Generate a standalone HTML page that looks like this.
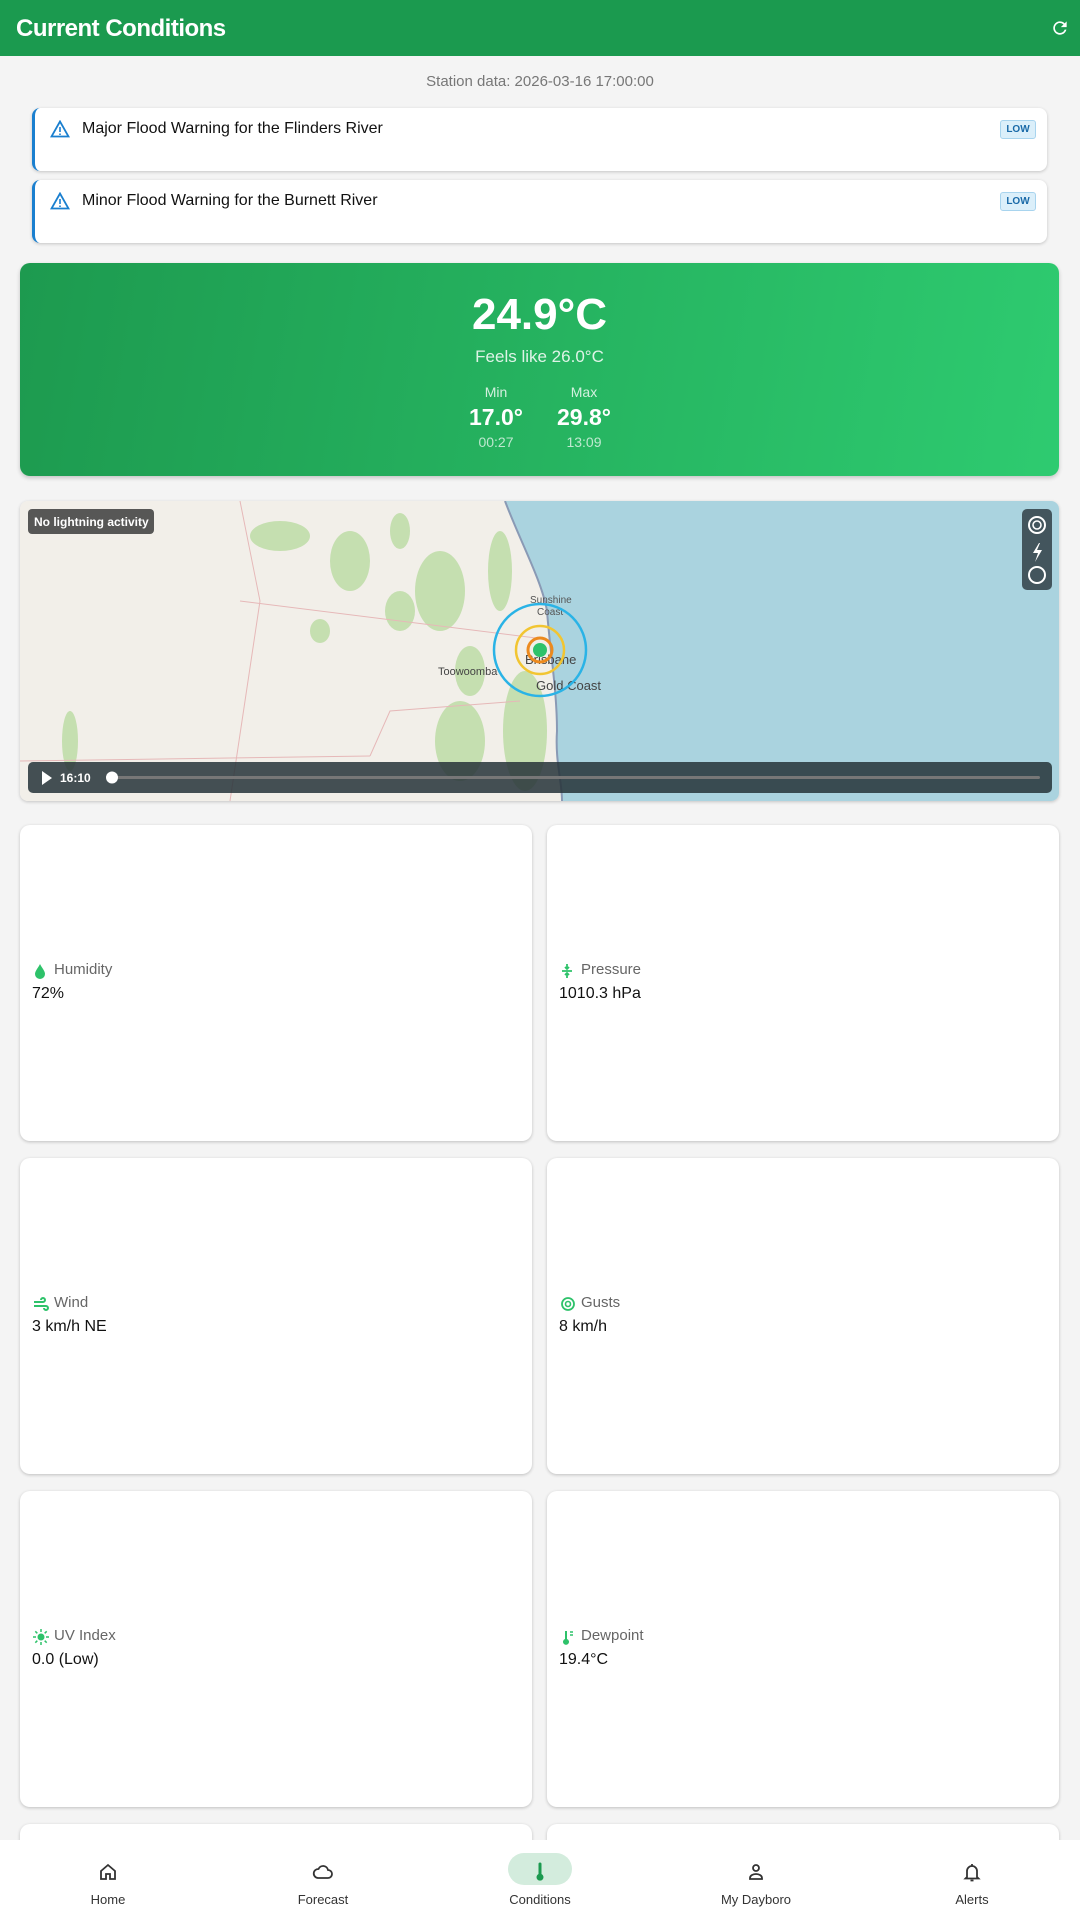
<!DOCTYPE html>
<html style="height:1920px;overflow:hidden"><head><meta charset="utf-8"><style>
*{box-sizing:border-box;margin:0;padding:0}
body{width:1080px;height:1920px;overflow:hidden;background:#f4f4f4;font-family:"Liberation Sans",sans-serif;position:relative;color:#111}
.hdr{position:absolute;left:0;top:0;width:1080px;height:56px;background:#1b9a4f;color:#fff}
.hdr h1{position:absolute;left:16px;top:15px;font-size:24px;font-weight:bold;letter-spacing:-0.5px}
.st{position:absolute;top:73px;width:1080px;text-align:center;color:#777;font-size:15px}
.al{position:absolute;left:32px;width:1015px;height:63px;background:#fff;border-left:3px solid #1a7fcf;border-radius:8px;box-shadow:0 1px 3px rgba(0,0,0,.2)}
.al .t{position:absolute;left:47px;top:12px;font-size:16px}
.al svg{position:absolute;left:15px;top:12px}
.al .b{position:absolute;right:11px;top:12px;width:36px;height:19px;background:#dbeffa;border:1px solid #a8d4ee;border-radius:3px;font-size:10px;color:#1a6aa8;text-align:center;line-height:17px;font-weight:bold}
.tc{position:absolute;left:20px;top:263px;width:1039px;height:213px;border-radius:10px;background:linear-gradient(100deg,#1d9a4f,#2ecb70);box-shadow:0 2px 4px rgba(0,0,0,.2);color:#fff;text-align:center}
.map{position:absolute;left:20px;top:501px;width:1039px;height:300px;border-radius:8px;overflow:hidden;box-shadow:0 1px 3px rgba(0,0,0,.2)}
.c{position:absolute;background:#fff;border-radius:10px;box-shadow:0 1px 3px rgba(0,0,0,.22);width:512px;height:316px}
.c .l{position:absolute;left:34px;top:136px;font-size:15px;color:#666}
.c .v{position:absolute;left:12px;top:160px;font-size:16px;color:#111}
.c svg{position:absolute;left:13px;top:138px}
.nav{position:absolute;left:0;top:1840px;width:1080px;height:80px;background:#fff}
.ni{position:absolute;top:0;width:140px;text-align:center;font-size:13px;color:#333}
.ni .lb{position:absolute;top:52px;width:140px}
.ni svg{position:absolute;left:58px;top:20px}
</style></head><body>
<div class="hdr"><h1>Current Conditions</h1>
<svg style="position:absolute;left:1050px;top:18px" width="20" height="20" viewBox="0 0 24 24"><path d="M17.6 6.4A8 8 0 1 0 19.7 14h-2.1a6 6 0 1 1-1.4-6.2L13 11h7V4z" fill="#fff"/></svg></div>
<div class="st">Station data: 2026-03-16 17:00:00</div>
<div class="al" style="top:108px"><svg width="20" height="18" viewBox="0 0 20 18"><path d="M10 1.5L1.5 16.5h17z" fill="none" stroke="#1a7fcf" stroke-width="1.8"/><path d="M10 7v5M10 13.5v1.5" stroke="#1a7fcf" stroke-width="1.6"/></svg><div class="t">Major Flood Warning for the Flinders River</div><div class="b">LOW</div></div>
<div class="al" style="top:180px"><svg width="20" height="18" viewBox="0 0 20 18"><path d="M10 1.5L1.5 16.5h17z" fill="none" stroke="#1a7fcf" stroke-width="1.8"/><path d="M10 7v5M10 13.5v1.5" stroke="#1a7fcf" stroke-width="1.6"/></svg><div class="t">Minor Flood Warning for the Burnett River</div><div class="b">LOW</div></div>
<div class="tc">
<div style="position:absolute;top:27px;width:100%;font-size:44px;font-weight:bold">24.9°C</div>
<div style="position:absolute;top:84px;width:100%;font-size:17px;opacity:.85">Feels like 26.0°C</div>
<div style="position:absolute;left:446px;top:121px;width:60px;font-size:14px;opacity:.8">Min</div>
<div style="position:absolute;left:534px;top:121px;width:60px;font-size:14px;opacity:.8">Max</div>
<div style="position:absolute;left:436px;top:141px;width:80px;font-size:23px;font-weight:bold">17.0°</div>
<div style="position:absolute;left:524px;top:141px;width:80px;font-size:23px;font-weight:bold">29.8°</div>
<div style="position:absolute;left:446px;top:171px;width:60px;font-size:14px;opacity:.7">00:27</div>
<div style="position:absolute;left:534px;top:171px;width:60px;font-size:14px;opacity:.7">13:09</div>
</div>
<div class="map">
<svg width="1039" height="300" viewBox="0 0 1039 300" style="position:absolute;left:0;top:0">
<rect width="1039" height="300" fill="#f2efe9"/>
<g fill="#c5dfb0">
<ellipse cx="260" cy="35" rx="30" ry="15"/><ellipse cx="330" cy="60" rx="20" ry="30"/><ellipse cx="380" cy="110" rx="15" ry="20"/><ellipse cx="420" cy="90" rx="25" ry="40"/><ellipse cx="450" cy="170" rx="15" ry="25"/><ellipse cx="440" cy="240" rx="25" ry="40"/><ellipse cx="505" cy="230" rx="22" ry="60"/><ellipse cx="480" cy="70" rx="12" ry="40"/><ellipse cx="50" cy="240" rx="8" ry="30"/><ellipse cx="380" cy="30" rx="10" ry="18"/><ellipse cx="300" cy="130" rx="10" ry="12"/>
</g>
<g stroke="#e6b8b8" stroke-width="1" fill="none"><path d="M220 0 L240 100 L210 300"/><path d="M220 100 L540 140"/><path d="M0 260 L350 255"/><path d="M350 255 L370 210 L500 200"/></g>
<path d="M485 0 C500 40 522 80 527 110 C530 150 537 190 537 230 C535 260 542 280 542 300 L1039 300 L1039 0 Z" fill="#aad3df"/>
<path d="M485 0 C500 40 522 80 527 110 C530 150 537 190 537 230 C535 260 542 280 542 300" stroke="#8a9ab5" stroke-width="2" fill="none"/>
<text x="510" y="102" font-size="10" fill="#555" font-family="Liberation Sans">Sunshine</text>
<text x="517" y="114" font-size="10" fill="#555" font-family="Liberation Sans">Coast</text>
<text x="418" y="174" font-size="11" fill="#444" font-family="Liberation Sans">Toowoomba</text>
<text x="505" y="163" font-size="13" fill="#444" font-family="Liberation Sans">Brisbane</text>
<text x="516" y="189" font-size="13" fill="#444" font-family="Liberation Sans">Gold Coast</text>
<circle cx="520" cy="149" r="46" fill="none" stroke="#2ab3e6" stroke-width="2.5"/>
<circle cx="520" cy="149" r="24" fill="none" stroke="#f2c531" stroke-width="2.5"/>
<circle cx="520" cy="149" r="12" fill="none" stroke="#ec8a1e" stroke-width="3"/>
<circle cx="520" cy="149" r="7" fill="#2ec26a"/>
<rect x="8" y="8" width="126" height="25" rx="4" fill="#3c3c3c" opacity=".85"/>
<text x="14" y="25" font-size="12" font-weight="bold" fill="#fff" font-family="Liberation Sans">No lightning activity</text>
<rect x="1002" y="8" width="30" height="81" rx="5" fill="#37474f" opacity=".9"/>
<circle cx="1017" cy="24" r="8" fill="none" stroke="#fff" stroke-width="2"/><circle cx="1017" cy="24" r="4" fill="none" stroke="#fff" stroke-width="1.6"/>
<path d="M1019 42 L1013 52 L1018 52 L1015 61 L1022 49 L1017 49 L1020 42Z" fill="#fff"/>
<circle cx="1017" cy="74" r="8" fill="none" stroke="#fff" stroke-width="2"/>
<rect x="8" y="261" width="1024" height="31" rx="5" fill="#263238" opacity=".85"/>
<path d="M22 270 L32 277 L22 284Z" fill="#fff"/>
<text x="40" y="281" font-size="12" font-weight="bold" fill="#fff" font-family="Liberation Sans">16:10</text>
<rect x="90" y="275" width="930" height="3" rx="1.5" fill="#777"/>
<circle cx="92" cy="276.5" r="6" fill="#fff"/>
</svg></div>

<div class="c" style="left:20px;top:825px"><svg width="14" height="16" viewBox="0 0 14 16"><path d="M7 1C5 5 2 8 2 11a5 5 0 0 0 10 0c0-3-3-6-5-10z" fill="#2ec26a"/></svg><div class="l">Humidity</div><div class="v">72%</div></div>
<div class="c" style="left:547px;top:825px"><svg width="14" height="16" viewBox="0 0 14 16"><path d="M2 8h10M7 1v5M5 4l2 2 2-2M7 15v-5M5 12l2-2 2 2" stroke="#2ec26a" stroke-width="1.8" fill="none"/></svg><div class="l">Pressure</div><div class="v">1010.3 hPa</div></div>
<div class="c" style="left:20px;top:1158px"><svg width="16" height="16" viewBox="0 0 16 16"><path d="M1 6h9a2 2 0 1 0-2-2M1 10h12a2 2 0 1 1-2 2" stroke="#2ec26a" stroke-width="2" fill="none"/></svg><div class="l">Wind</div><div class="v">3 km/h NE</div></div>
<div class="c" style="left:547px;top:1158px"><svg width="16" height="16" viewBox="0 0 16 16"><circle cx="8" cy="8" r="6" fill="none" stroke="#2ec26a" stroke-width="1.8"/><circle cx="8" cy="8" r="2.5" fill="none" stroke="#2ec26a" stroke-width="1.6"/></svg><div class="l">Gusts</div><div class="v">8 km/h</div></div>
<div class="c" style="left:20px;top:1491px"><svg width="16" height="16" viewBox="0 0 16 16"><circle cx="8" cy="8" r="3.5" fill="#2ec26a"/><path d="M8 0v3M8 13v3M0 8h3M13 8h3M2.3 2.3l2 2M11.7 11.7l2 2M2.3 13.7l2-2M11.7 4.3l2-2" stroke="#2ec26a" stroke-width="1.5"/></svg><div class="l">UV Index</div><div class="v">0.0 (Low)</div></div>
<div class="c" style="left:547px;top:1491px"><svg width="16" height="16" viewBox="0 0 16 16"><path d="M5 2v8a3 3 0 1 0 2 0V2z" fill="#2ec26a"/><path d="M10 3h3M10 6h3" stroke="#2ec26a" stroke-width="1.5"/></svg><div class="l">Dewpoint</div><div class="v">19.4°C</div></div>
<div class="c" style="left:20px;top:1824px;height:96px;border-radius:10px 10px 0 0"></div>
<div class="c" style="left:547px;top:1824px;height:96px;border-radius:10px 10px 0 0"></div>

<div class="nav">
<div class="ni" style="left:38px"><svg width="24" height="24" viewBox="0 0 24 24"><path d="M5 11l7-6 7 6v8h-5v-5h-4v5H5z" fill="none" stroke="#333" stroke-width="1.8"/></svg><div class="lb">Home</div></div>
<div class="ni" style="left:253px"><svg width="24" height="24" viewBox="0 0 24 24"><path d="M7 18h10a4 4 0 0 0 0-8 5 5 0 0 0-9.5-1A4.5 4.5 0 0 0 7 18z" fill="none" stroke="#333" stroke-width="1.8"/></svg><div class="lb">Forecast</div></div>
<div class="ni" style="left:470px"><div style="position:absolute;left:38px;top:13px;width:64px;height:32px;border-radius:16px;background:#d3ecdd"></div><svg width="24" height="24" viewBox="0 0 24 24"><path d="M10.5 4a1.5 1.5 0 0 1 3 0v10a3.5 3.5 0 1 1-3 0z" fill="#1b9a4f"/></svg><div class="lb">Conditions</div></div>
<div class="ni" style="left:686px"><svg width="24" height="24" viewBox="0 0 24 24"><circle cx="12" cy="8" r="3" fill="none" stroke="#333" stroke-width="1.8"/><path d="M6 19v-1a6 4 0 0 1 12 0v1z" fill="none" stroke="#333" stroke-width="1.8"/></svg><div class="lb">My Dayboro</div></div>
<div class="ni" style="left:902px"><svg width="24" height="24" viewBox="0 0 24 24"><path d="M7 17V11a5 5 0 0 1 10 0v6l1.5 1.5h-13zM12 4v2M10.5 20.5h3" fill="none" stroke="#333" stroke-width="1.8"/></svg><div class="lb">Alerts</div></div>
</div>
</body></html>
